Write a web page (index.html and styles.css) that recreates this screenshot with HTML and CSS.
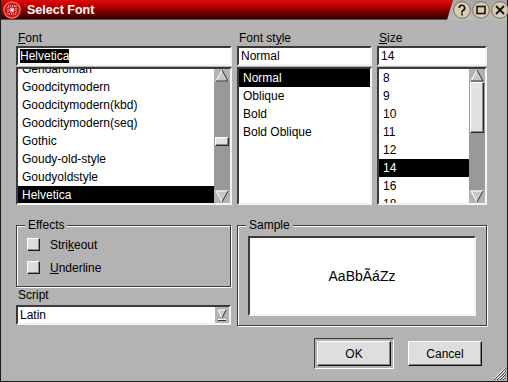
FILE: index.html
```html
<!DOCTYPE html>
<html lang="en">

<head>
  <meta charset="UTF-8">
  <title>Select Font</title>
  <link rel="stylesheet" href="styles.css">
</head>

<body>
  <div class="window">
    <div class="titlebar">
      <div class="title-band">
        <svg class="app-icon" width="18" height="18" viewBox="0 0 18 18">
          <circle cx="9" cy="9" r="8.2" fill="#d41818" stroke="#f07a7a" stroke-width="1.2" />
          <rect x="5" y="5" width="8" height="8" fill="none" stroke="#fff" stroke-width="1" stroke-dasharray="1 1" />
          <path d="M9 6.5v5M6.5 9h5M7.3 7.3l3.4 3.4M10.7 7.3l-3.4 3.4" stroke="#fff" stroke-width="1" />
        </svg>
        <span class="title">Select Font</span>
      </div>
      <div class="title-buttons">
        <svg width="18" height="18" viewBox="0 0 18 18">
          <circle cx="9" cy="9" r="8.3" fill="#d9cdb2" stroke="#7d6f58" stroke-width="1" />
          <path d="M6.3 7a2.7 2.7 0 1 1 3.6 2.5c-.7.3-.9.8-.9 1.5v.8" fill="none" stroke="#111" stroke-width="1.7" />
          <rect x="8.1" y="12.6" width="1.8" height="1.8" fill="#111" />
        </svg>
        <svg width="18" height="18" viewBox="0 0 18 18">
          <circle cx="9" cy="9" r="8.3" fill="#d9cdb2" stroke="#7d6f58" stroke-width="1" />
          <rect x="5" y="5.5" width="8" height="7" fill="none" stroke="#111" stroke-width="1.6" />
        </svg>
        <svg width="18" height="18" viewBox="0 0 18 18">
          <circle cx="9" cy="9" r="8.3" fill="#d9cdb2" stroke="#7d6f58" stroke-width="1" />
          <path d="M5 5l8 8M13 5l-8 8" stroke="#111" stroke-width="1.8" />
        </svg>
      </div>
    </div>

    <div class="main">
      <div class="pickers">
        <div class="picker">
          <label class="caption"><u>F</u>ont</label>
          <div class="field"><span class="sel-text">Helvetica</span></div>
          <div class="list">
            <div class="items shifted">
              <div class="item">Genoaroman</div>
              <div class="item">Goodcitymodern</div>
              <div class="item">Goodcitymodern(kbd)</div>
              <div class="item">Goodcitymodern(seq)</div>
              <div class="item">Gothic</div>
              <div class="item">Goudy-old-style</div>
              <div class="item">Goudyoldstyle</div>
              <div class="item selected">Helvetica</div>
            </div>
            <div class="scrollbar">
              <svg class="arrow" width="16" height="13" viewBox="0 0 16 13">
                <polygon points="8,1 14,12 2,12" fill="#c8c8c8" />
                <path d="M8 1L2 12" stroke="#fff" stroke-width="1" />
                <path d="M8 1l6 11H2" fill="none" stroke="#333" stroke-width="1" />
              </svg>
              <div class="track">
                <div class="thumb small"></div>
              </div>
              <svg class="arrow" width="16" height="13" viewBox="0 0 16 13">
                <polygon points="2,1 14,1 8,12" fill="#c8c8c8" />
                <path d="M2 1h12M2 1l6 11" fill="none" stroke="#fff" stroke-width="1" />
                <path d="M14 1L8 12" stroke="#333" stroke-width="1" />
              </svg>
            </div>
          </div>
        </div>

        <div class="picker">
          <label class="caption">Font st<u>y</u>le</label>
          <div class="field">Normal</div>
          <div class="list">
            <div class="items">
              <div class="item selected">Normal</div>
              <div class="item">Oblique</div>
              <div class="item">Bold</div>
              <div class="item">Bold Oblique</div>
            </div>
          </div>
        </div>

        <div class="picker">
          <label class="caption"><u>S</u>ize</label>
          <div class="field">14</div>
          <div class="list">
            <div class="items">
              <div class="item">8</div>
              <div class="item">9</div>
              <div class="item">10</div>
              <div class="item">11</div>
              <div class="item">12</div>
              <div class="item selected">14</div>
              <div class="item">16</div>
              <div class="item">18</div>
            </div>
            <div class="scrollbar">
              <svg class="arrow" width="16" height="13" viewBox="0 0 16 13">
                <polygon points="8,1 14,12 2,12" fill="#c8c8c8" />
                <path d="M8 1L2 12" stroke="#fff" stroke-width="1" />
                <path d="M8 1l6 11H2" fill="none" stroke="#333" stroke-width="1" />
              </svg>
              <div class="track">
                <div class="thumb big"></div>
              </div>
              <svg class="arrow" width="16" height="13" viewBox="0 0 16 13">
                <polygon points="2,1 14,1 8,12" fill="#c8c8c8" />
                <path d="M2 1h12M2 1l6 11" fill="none" stroke="#fff" stroke-width="1" />
                <path d="M14 1L8 12" stroke="#333" stroke-width="1" />
              </svg>
            </div>
          </div>
        </div>
      </div>

      <div class="lower">
        <div class="left-col">
          <div class="group effects">
            <span class="legend">Effects</span>
            <div class="check-row"><span class="checkbox"></span><span>Stri<u>k</u>eout</span></div>
            <div class="check-row"><span class="checkbox"></span><span><u>U</u>nderline</span></div>
          </div>
          <label class="caption script">Script</label>
          <div class="combo">
            <span>Latin</span>
            <svg class="combo-arrow" width="14" height="16" viewBox="0 0 14 16">
              <path d="M3 3h8L7 11z" fill="#c8c8c8" />
              <path d="M3 3h8M3 3l4 8" fill="none" stroke="#fff" stroke-width="1" />
              <path d="M11 3L7 11" stroke="#333" stroke-width="1" />
              <path d="M3 13.5h8" stroke="#333" stroke-width="1" />
              <path d="M3 12.5h8" stroke="#fff" stroke-width="1" />
            </svg>
          </div>
        </div>

        <div class="group sample">
          <span class="legend">Sample</span>
          <div class="sample-box">AaBbÃáZz</div>
        </div>
      </div>

      <div class="actions">
        <div class="default-frame">
          <button class="btn">OK</button>
        </div>
        <button class="btn">Cancel</button>
      </div>

      <svg class="grip" width="14" height="14" viewBox="0 0 14 14">
        <path d="M13 2L2 13M13 5L5 13M13 8L8 13M13 11L11 13" stroke="#fff" stroke-width="1" />
        <path d="M14 2L2 14M14 5L5 14M14 8L8 14M14 11L11 14" stroke="#444" stroke-width="1" />
      </svg>
    </div>
  </div>
</body>

</html>
```

FILE: styles.css
```css
* {
  box-sizing: border-box;
  margin: 0;
  padding: 0;
}

body {
  font-family: "Liberation Sans", Arial, sans-serif;
  font-size: 12px;
  color: #000;
  background-color: #b3b3b3;
}

.window {
  position: relative;
  width: 508px;
  height: 382px;
  display: flex;
  flex-direction: column;
  background-color: #b3b3b3;
  border: 1px solid #1a1a1a;
  border-top: 0;
}

/* title bar */

.titlebar {
  display: flex;
  height: 20px;
  background: linear-gradient(#a6a6a6, #bcbcbc);
}

.title-band {
  flex: 0 0 452px;
  display: flex;
  align-items: center;
  gap: 6px;
  padding-left: 2px;
  background: linear-gradient(#e00808 0%, #b00000 35%, #5a0000 80%, #2a0000 95%);
  border-bottom: 1px solid #ee1010;
  clip-path: polygon(0 0, 100% 0, calc(100% - 6px) 100%, 0 100%);
}

.title {
  color: #fff;
  font-weight: bold;
  font-size: 12.5px;
  line-height: 16px;
}

.title-buttons {
  display: flex;
  align-items: center;
  gap: 1px;
  margin-left: auto;
}

/* content */

.main {
  flex: 1;
  display: flex;
  flex-direction: column;
  padding: 11px 20px 0 15px;
}

.pickers {
  display: grid;
  grid-template-columns: 216px 135px 110px;
  column-gap: 5px;
}

.picker {
  display: flex;
  flex-direction: column;
}

.caption {
  display: block;
  height: 14px;
  line-height: 14px;
  padding-left: 2px;
  margin-bottom: 1px;
}

.field {
  height: 20px;
  line-height: 16px;
  padding-left: 2px;
  background-color: #fff;
  border: 2px solid;
  border-color: #3a3a3a #f4f4f4 #f4f4f4 #3a3a3a;
  margin-bottom: 1px;
  white-space: nowrap;
  overflow: hidden;
}

.sel-text {
  background-color: #000;
  color: #fff;
}

.list {
  display: flex;
  height: 138px;
  background-color: #fff;
  border: 2px solid;
  border-color: #3a3a3a #f4f4f4 #f4f4f4 #3a3a3a;
  overflow: hidden;
}

.items {
  flex: 1;
  min-width: 0;
}

.items.shifted {
  margin-top: -9px;
}

.item {
  height: 18px;
  line-height: 18px;
  padding-left: 4px;
  white-space: nowrap;
}

.item.selected {
  background-color: #000;
  color: #fff;
}

/* scrollbars */

.scrollbar {
  flex: 0 0 16px;
  display: flex;
  flex-direction: column;
  background-color: #b3b3b3;
}

.arrow {
  display: block;
  flex: 0 0 13px;
}

.track {
  flex: 1;
  background-color: #999;
  display: flex;
  flex-direction: column;
  padding: 0 1px;
}

.thumb {
  background-color: #e2e2e2;
  border: 1px solid;
  border-color: #fff #2a2a2a #2a2a2a #fff;
  box-shadow: inset -1px -1px 0 #8a8a8a;
}

.thumb.small {
  height: 9px;
  margin-top: 55px;
}

.thumb.big {
  height: 51px;
}

/* lower half */

.lower {
  display: grid;
  grid-template-columns: 215px 250px;
  column-gap: 6px;
  margin-top: 13px;
  align-items: start;
}

.left-col {
  display: flex;
  flex-direction: column;
}

.group {
  position: relative;
  margin-top: 7px;
  border: 1px solid #3c3c3c;
  box-shadow: 1px 1px 0 #fff, inset 1px 1px 0 #fff;
}

.legend {
  position: absolute;
  top: -8px;
  left: 8px;
  padding: 0 3px;
  line-height: 14px;
  background-color: #b3b3b3;
}

.effects {
  padding: 7px 10px 7px 10px;
}

.check-row {
  display: flex;
  align-items: center;
  gap: 10px;
  height: 23px;
}

.checkbox {
  width: 13px;
  height: 13px;
  background-color: #dcdcdc;
  border: 1px solid;
  border-color: #fff #1e1e1e #1e1e1e #fff;
  box-shadow: inset -1px -1px 0 #8a8a8a;
}

.script {
  margin-top: 1px;
  margin-bottom: 3px;
}

.combo {
  display: flex;
  align-items: center;
  justify-content: space-between;
  height: 20px;
  padding-left: 2px;
  background-color: #fff;
  border: 2px solid;
  border-color: #3a3a3a #f4f4f4 #f4f4f4 #3a3a3a;
}

.combo-arrow {
  display: block;
  background-color: #b3b3b3;
}

.sample {
  padding: 10px 10px 9px 10px;
}

.sample-box {
  height: 80px;
  display: flex;
  align-items: center;
  justify-content: center;
  font-size: 14px;
  background-color: #fff;
  border: 2px solid;
  border-color: #3a3a3a #f4f4f4 #f4f4f4 #3a3a3a;
}

/* buttons */

.actions {
  display: flex;
  justify-content: flex-end;
  align-items: center;
  gap: 14px;
  margin-top: 12px;
  margin-right: 5px;
}

.default-frame {
  padding: 2px;
  border: 1px solid;
  border-color: #3c3c3c #fff #fff #3c3c3c;
}

.btn {
  display: block;
  width: 74px;
  height: 25px;
  font-family: inherit;
  font-size: 12px;
  color: #000;
  background-color: #dedede;
  border: 1px solid;
  border-color: #fff #111 #111 #fff;
  box-shadow: inset -1px -1px 0 #808080;
}

.grip {
  position: absolute;
  right: 1px;
  bottom: 1px;
}
```
